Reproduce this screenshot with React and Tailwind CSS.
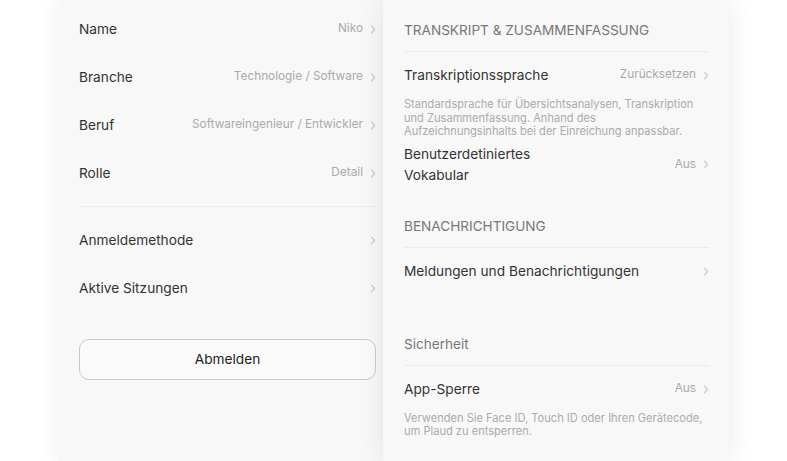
import React from "react";

function Chevron() {
  return (
    <svg width="6" height="9" viewBox="0 0 6 9" className="shrink-0">
      <path d="M1.5 1.2L4.6 4.5L1.5 7.8" fill="none" stroke="#c6c6c6" strokeWidth="1.1" strokeLinecap="round" strokeLinejoin="round" />
    </svg>
  );
}

function Row({ label, value, className = "h-[48px]" }) {
  return (
    <div className={`flex items-center justify-between ${className}`}>
      <span className="text-[13.7px] text-[#333333]">{label}</span>
      <div className="flex items-center gap-[7px]">
        {value && <span className="text-[11.8px] text-[#aaaaaa]">{value}</span>}
        <Chevron />
      </div>
    </div>
  );
}

function SectionHeader({ title, className = "" }) {
  return (
    <div className={`border-b border-[#ececec] pb-[11px] ${className}`}>
      <p className="text-[13.6px] leading-[20px] text-[#777777]">{title}</p>
    </div>
  );
}

function Note({ children, className = "" }) {
  return <p className={`text-[11.1px] leading-[13.5px] text-[#ababab] ${className}`}>{children}</p>;
}

export default function App() {
  return (
    <div
      className="w-[787px] h-[461px] overflow-hidden bg-white flex pl-[58px]"
      style={{ fontFamily: "Inter, 'Noto Sans', sans-serif" }}
    >
      {/* Account panel */}
      <div className="w-[325px] h-full bg-[#f8f8f8] shadow-[0_0_22px_rgba(0,0,0,0.07)] pl-[21px] pr-[7px] pt-[5px]">
        <Row label="Name" value="Niko" />
        <Row label="Branche" value="Technologie / Software" />
        <Row label="Beruf" value="Softwareingenieur / Entwickler" />
        <Row label="Rolle" value="Detail" />
        <div className="mt-[9px] mb-[9px] border-t border-[#ececec]" />
        <Row label="Anmeldemethode" />
        <Row label="Aktive Sitzungen" />
        <button className="mt-[27px] w-full h-[41px] rounded-[10px] border border-[#c9c9c9] bg-[#fafafa] text-[13.7px] text-[#222]">
          Abmelden
        </button>
      </div>

      {/* Settings panel */}
      <div className="relative z-10 w-[346px] h-full bg-[#f8f8f8] shadow-[0_0_26px_rgba(0,0,0,0.09)] pl-[21px] pr-[20px] pt-[20px]">
        <SectionHeader title="TRANSKRIPT & ZUSAMMENFASSUNG" />
        <Row label="Transkriptionssprache" value="Zurücksetzen" className="h-[46px]" />
        <Note>
          Standardsprache für Übersichtsanalysen, Transkription und Zusammenfassung. Anhand des
          Aufzeichnungsinhalts bei der Einreichung anpassbar.
        </Note>
        <div className="flex items-center justify-between py-[5px]">
          <span className="text-[13.7px] leading-[21px] text-[#333333]">
            Benutzerdetiniertes
            <br />
            Vokabular
          </span>
          <div className="flex items-center gap-[7px]">
            <span className="text-[11.8px] text-[#aaaaaa]">Aus</span>
            <Chevron />
          </div>
        </div>
        <SectionHeader title="BENACHRICHTIGUNG" className="mt-[25px]" />
        <Row label="Meldungen und Benachrichtigungen" className="h-[48px]" />
        <SectionHeader title="Sicherheit" className="mt-[38px]" />
        <Row label="App-Sperre" value="Aus" className="h-[47px]" />
        <Note className="-mt-[1px]">
          Verwenden Sie Face ID, Touch ID oder Ihren Gerätecode, um Plaud zu entsperren.
        </Note>
      </div>
    </div>
  );
}
